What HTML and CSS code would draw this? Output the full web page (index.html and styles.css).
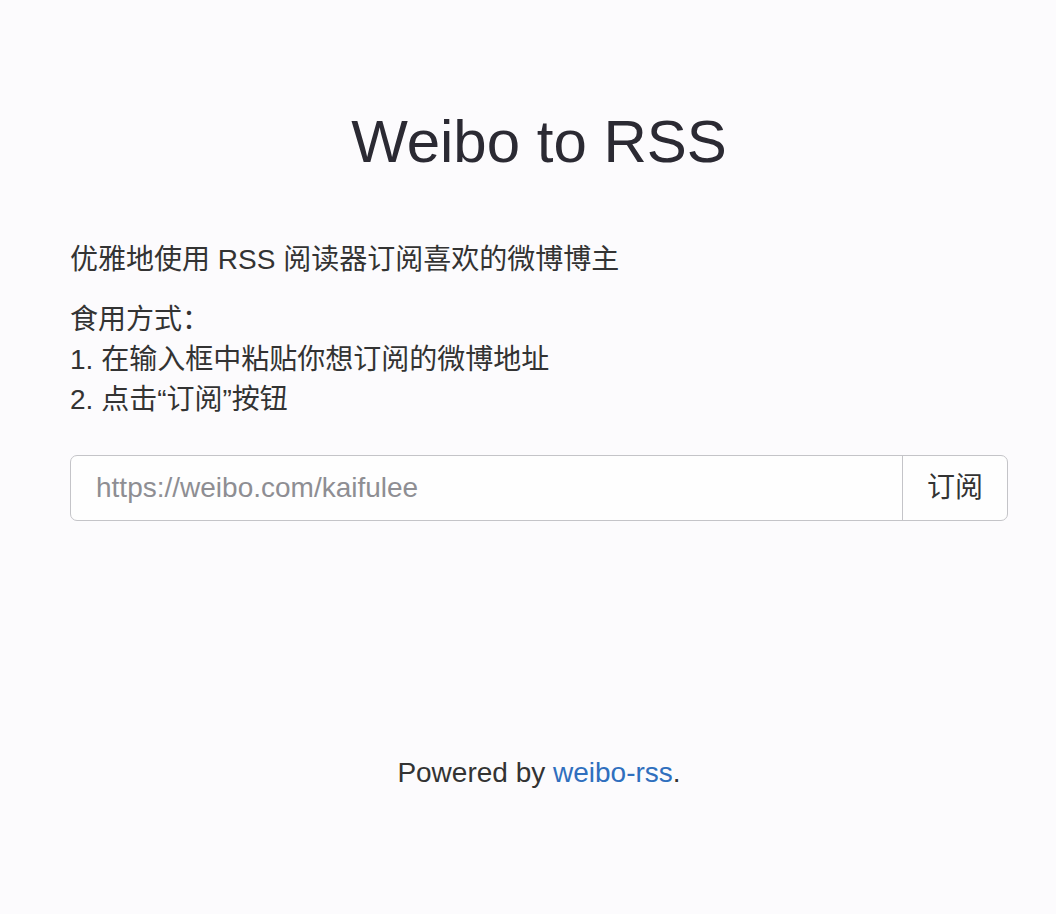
FILE: index.html
```html
<!DOCTYPE html>
<html lang="zh-CN">
<head>
    <meta charset="UTF-8">
    <meta name="viewport" content="width=device-width, initial-scale=1.0">
    <title>Weibo to RSS</title>
    <link rel="stylesheet" href="styles.css">
</head>
<body>

<div class="container">
    <h1>Weibo to RSS</h1>
    <p>优雅地使用 RSS 阅读器订阅喜欢的微博博主</p>
    <p>食用方式：<br>1. 在输入框中粘贴你想订阅的微博地址<br>2. 点击“订阅”按钮</p>

    <form class="subscribe">
        <input type="text" placeholder="https://weibo.com/kaifulee">
        <button type="button">订阅</button>
    </form>

    <footer class="footer">Powered by <a href="#">weibo-rss</a>.</footer>
</div>

</body>
</html>
```

FILE: styles.css
```css
body { margin: 0; background-color: #fcfbfd; color: #333; font-family: "Liberation Sans", Arial, "Noto Sans CJK SC", sans-serif; font-size: 28px; line-height: 40px; }
.container { width: 938px; padding: 109px 0 0 70px; }
h1 { margin: 0 0 65px; font-size: 60px; font-weight: normal; line-height: 66px; text-align: center; color: #2b2a33; }
p { margin: 0 0 20px; }
.subscribe { display: flex; margin-top: 35px; height: 66px; border: 1px solid #c4c4c8; border-radius: 7px; background-color: #fefefe; overflow: hidden; box-sizing: border-box; }
.subscribe input { flex: 1; border: 0; padding: 0 25px; font: inherit; color: #555; background: transparent; outline: none; }
.subscribe input::placeholder { color: #8e8e93; }
.subscribe button { width: 105px; border: 0; border-left: 1px solid #c4c4c8; background: transparent; font: inherit; color: #333; cursor: pointer; }
.footer { margin-top: 232px; text-align: center; }
.footer a { color: #2f6fbe; text-decoration: none; }
```
